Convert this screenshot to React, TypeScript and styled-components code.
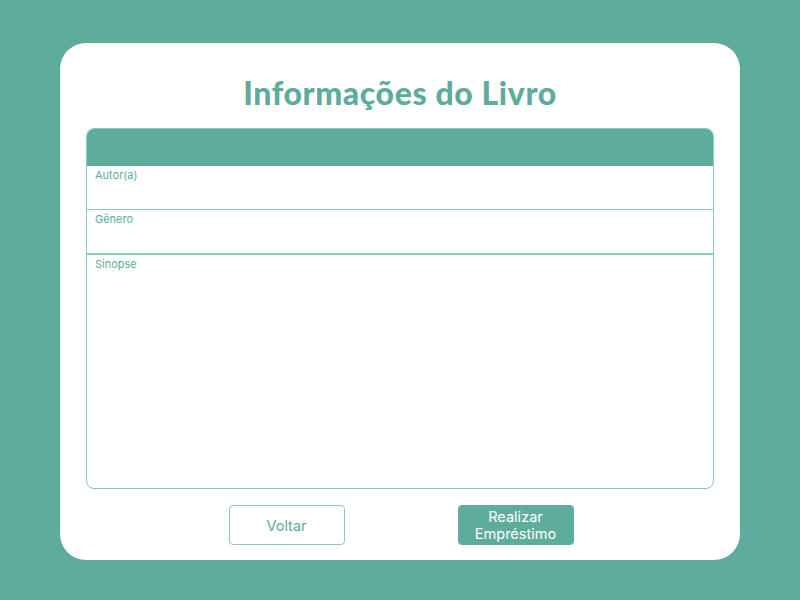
import React from "react";
import styled, { createGlobalStyle } from "styled-components";

const teal = "#5eac9b";
const lineTeal = "#8ccabb";

const GlobalStyle = createGlobalStyle`
  html, body {
    margin: 0;
    padding: 0;
    background: ${teal};
  }
  body {
    font-family: "Lato", "Liberation Sans", sans-serif;
  }
`;

const Page = styled.div`
  width: 800px;
  height: 600px;
  box-sizing: border-box;
  padding: 43px 60px 40px;
  background: ${teal};
`;

const Card = styled.div`
  width: 680px;
  height: 517px;
  box-sizing: border-box;
  background: #ffffff;
  border-radius: 26px;
  padding: 0 26px;
  display: flex;
  flex-direction: column;
`;

const Title = styled.h1`
  margin: 30px 0 0;
  height: 55px;
  text-align: center;
  font-family: "Lato", sans-serif;
  font-weight: 900;
  font-size: 32px;
  line-height: 40px;
  color: ${teal};
  letter-spacing: 0.6px;
`;

const Table = styled.div`
  height: 361px;
  border: 1px solid ${lineTeal};
  border-radius: 8px;
  overflow: hidden;
  display: flex;
  flex-direction: column;
  box-sizing: border-box;
`;

const Header = styled.div`
  height: 37px;
  background: ${teal};
  flex: none;
`;

const Row = styled.div<{ $grow?: boolean }>`
  height: ${(p) => (p.$grow ? "auto" : "44px")};
  flex: ${(p) => (p.$grow ? "1" : "none")};
  box-sizing: border-box;
  border-top: ${(p) => (p.$grow ? `1px solid ${lineTeal}` : "none")};
  border-bottom: ${(p) => (p.$grow ? "none" : `1px solid ${lineTeal}`)};
  padding: 0 8px;
  line-height: 14px;
`;

const Label = styled.span`
  font-family: "Inter", "Liberation Sans", sans-serif;
  font-size: 11px;
  color: ${teal};
`;

const Actions = styled.div`
  display: flex;
  justify-content: center;
  gap: 113px;
  margin-top: 16px;
  padding-left: 2px;
`;

const Button = styled.button<{ $primary?: boolean }>`
  width: 116px;
  height: 40px;
  box-sizing: border-box;
  border-radius: 4px;
  border: 1.5px solid ${(p) => (p.$primary ? teal : lineTeal)};
  background: ${(p) => (p.$primary ? teal : "#ffffff")};
  color: ${(p) => (p.$primary ? "#ffffff" : teal)};
  font-family: "Inter", "Liberation Sans", sans-serif;
  font-size: 14.5px;
  line-height: 17px;
  padding: 0;
  cursor: pointer;
`;

export default function App() {
  return (
    <>
      <GlobalStyle />
      <Page>
        <Card>
          <Title>Informações do Livro</Title>
          <Table>
            <Header />
            <Row>
              <Label>Autor(a)</Label>
            </Row>
            <Row>
              <Label>Gênero</Label>
            </Row>
            <Row $grow>
              <Label>Sinopse</Label>
            </Row>
          </Table>
          <Actions>
            <Button>Voltar</Button>
            <Button $primary>
              Realizar
              <br />
              Empréstimo
            </Button>
          </Actions>
        </Card>
      </Page>
    </>
  );
}
